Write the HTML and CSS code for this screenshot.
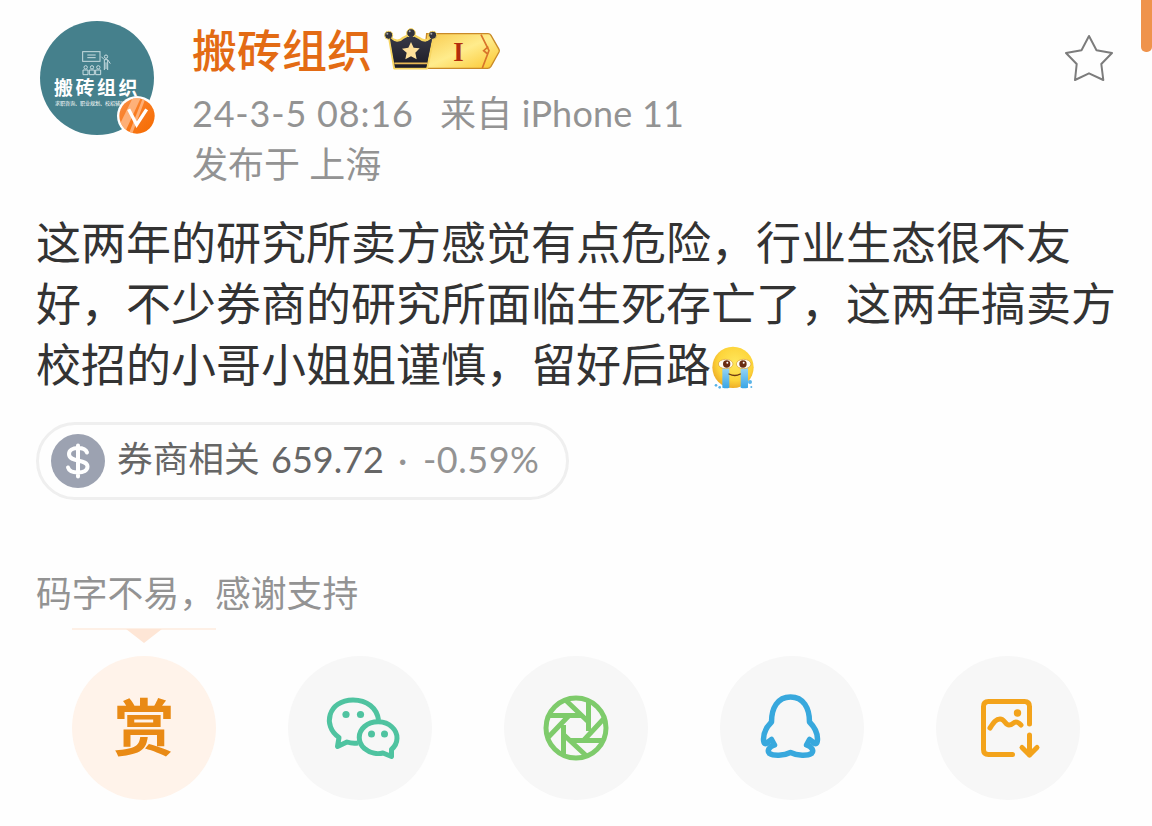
FILE: index.html
```html
<!DOCTYPE html>
<html lang="zh-CN">
<head>
  <meta charset="UTF-8" />
  <title>搬砖组织</title>
  <meta name="viewport" content="width=device-width, initial-scale=1.0"/>
  <link rel="stylesheet" href="styles.css">
</head>
<body>

<div class="scrollbar"></div>

<div class="post">
  <header class="post-header">
    <div class="avatar">
      <svg class="avatar-art" viewBox="0 0 90 75" fill="none" stroke="#c9dde1" stroke-width="3">
        <rect x="2" y="2" width="52" height="29"/>
        <path d="M16 12h25M16 20h25"/>
        <circle cx="72" cy="17" r="5"/>
        <path d="M58 17l9 9h10l8 12M67 27v30M77 27v30M72 34v20"/>
        <circle cx="11" cy="49" r="5"/><circle cx="30" cy="49" r="5"/><circle cx="49" cy="49" r="5"/>
        <path d="M3 71V57h15v14zM22 71V57h15v14zM41 71V57h15v14z"/>
      </svg>
      <div class="avatar-name">搬砖组织</div>
      <div class="avatar-sub">求职咨询、职业规划、校招辅导</div>
      <svg class="avatar-v" viewBox="0 0 120 120">
        <defs>
          <linearGradient id="vg" x1="0" y1="0" x2="1" y2="1">
            <stop offset="0" stop-color="#f98f48"/>
            <stop offset=".5" stop-color="#f97a1c"/>
            <stop offset="1" stop-color="#f56a00"/>
          </linearGradient>
          <clipPath id="vc"><circle cx="60" cy="60" r="53"/></clipPath>
        </defs>
        <circle cx="60" cy="60" r="60" fill="#fff"/>
        <circle cx="60" cy="60" r="53" fill="url(#vg)"/>
        <g clip-path="url(#vc)" fill="#ffc193" opacity=".75">
          <path d="M10 82L50 0h24L26 104z"/>
          <path d="M36 112L80 0h8L44 118z"/>
        </g>
        <path d="M35 40l24 46 30-46" fill="none" stroke="#fff" stroke-width="10"/>
      </svg>
    </div>

    <div class="info">
      <div class="name-row">
        <span class="name">搬砖组织</span>
        <svg class="vip" viewBox="0 0 390 180">
          <defs>
            <linearGradient id="gold" x1="0" y1="0" x2="1" y2="1">
              <stop offset="0" stop-color="#f8c94c"/>
              <stop offset=".5" stop-color="#ffec8c"/>
              <stop offset="1" stop-color="#fbc52c"/>
            </linearGradient>
            <linearGradient id="dark" x1="0" y1="0" x2="0" y2="1">
              <stop offset="0" stop-color="#3a3b48"/>
              <stop offset="1" stop-color="#1c1b25"/>
            </linearGradient>
          </defs>
          <path d="M140 41h184q6 0 9 5l24 42q2 4 0 8l-24 43q-4 6-10 6H130z" fill="url(#gold)" stroke="#c98a28" stroke-width="4"/>
          <path d="M303 44l24 48-20 52M325 80l-14 12 12 10" fill="none" stroke="#d8742a" stroke-width="5"/>
          <path d="M27 50q25 22 43 3l23-12 23 12q20 18 45-3l-20 95H43z" fill="url(#dark)" stroke="#f7d561" stroke-width="7" stroke-linejoin="round"/>
          <g fill="#34343c" stroke="#f7d561" stroke-width="3">
            <circle cx="26" cy="46" r="12"/><circle cx="93" cy="39" r="13"/><circle cx="158" cy="46" r="12"/>
          </g>
          <path d="M29 52q22 24 41 10l23-16 23 16q18 14 41-10l-18 91H45z" fill="url(#dark)"/>
          <path d="M43 130h98" stroke="#e9b955" stroke-width="5"/>
          <g fill="#a9a9a9"><circle cx="22" cy="41" r="3"/><circle cx="89" cy="34" r="3"/><circle cx="154" cy="41" r="3"/></g>
          <path d="M93 66l8 17 18 2-13 13 4 20-17-9-17 9 4-20-14-12 19-3z" fill="#ffe09a"/>
          <text class="vip-level" x="235" y="122" text-anchor="middle">I</text>
        </svg>
      </div>
      <div class="meta"><span class="date">24-3-5 08:16</span><span class="from">来自 iPhone 11</span></div>
      <div class="meta">发布于 上海</div>
    </div>

    <svg class="fav" viewBox="0 0 48 48" fill="none" stroke="#7c7c7c" stroke-width="2" stroke-linejoin="round">
      <path d="M24 2l7.500 14.200L47 19 36.300 30l2 16L24 39.300 10 46l1.700-16L1 19l15.500-2.800z"/>
    </svg>
  </header>

  <p class="content">这两年的研究所卖方感觉有点危险，行业生态很不友<br>好，不少券商的研究所面临生死存亡了，这两年搞卖方<br>校招的小哥小姐姐谨慎，留好后路<svg class="emoji" viewBox="0 0 132 132">
    <defs>
      <radialGradient id="face" cx=".55" cy=".4" r=".6">
        <stop offset="0" stop-color="#ffe75c"/>
        <stop offset=".7" stop-color="#fdd43a"/>
        <stop offset="1" stop-color="#eeae28"/>
      </radialGradient>
      <linearGradient id="tear" x1="0" y1="0" x2="0" y2="1">
        <stop offset="0" stop-color="#9ad6f5"/>
        <stop offset="1" stop-color="#38a5e6"/>
      </linearGradient>
    </defs>
    <circle cx="66" cy="64" r="62" fill="url(#face)"/>
    <path d="M34 64h21v61q-8 4-21 0zM89 64h22v61q-12 4-22 0z" fill="url(#tear)"/>
    <ellipse cx="44" cy="54" rx="22" ry="14" fill="#fffdf2" stroke="#d99a2c" stroke-width="2"/>
    <ellipse cx="98" cy="54" rx="22" ry="14" fill="#fffdf2" stroke="#d99a2c" stroke-width="2"/>
    <circle cx="47" cy="54" r="11" fill="#6a2b11"/><circle cx="96" cy="54" r="11" fill="#6a2b11"/>
    <circle cx="49" cy="50" r="3" fill="#fff"/><circle cx="98" cy="50" r="3" fill="#fff"/>
    <path d="M54 84q18 9 34 0" fill="none" stroke="#6f3a12" stroke-width="4" stroke-linecap="round"/>
    <g fill="#58b3e8"><circle cx="15" cy="118" r="4"/><circle cx="26" cy="124" r="4"/><circle cx="117" cy="108" r="6"/><circle cx="121" cy="123" r="3"/></g>
  </svg></p>

  <div class="stock">
    <svg class="stock-icon" viewBox="0 0 54 54">
      <circle cx="27" cy="27" r="27" fill="#9ca2b1"/>
      <path d="M36 18.500c-1-3-4.500-4.500-9-4.500-5.500 0-9 2.300-9 6 0 9 18.500 4.500 18.500 12.500 0 4-4 6-9.500 6-5 0-9-1.500-10-5M27 11.500v31" fill="none" stroke="#fff" stroke-width="4" stroke-linecap="round"/>
    </svg>
    <span class="stock-name">券商相关</span>
    <span class="stock-price">659.72</span>
    <span class="stock-dot">·</span>
    <span class="stock-change">-0.59%</span>
  </div>

  <div class="thanks">码字不易，感谢支持</div>
  <div class="pointer"></div>

  <div class="actions">
    <div class="action reward">赏</div>
    <div class="action">
      <svg viewBox="0 0 144 144" fill="none" stroke="#4fc3a0" stroke-width="5" stroke-linejoin="round">
        <path d="M70 87q-6 .8-11-1l-9.500 4.500 1.500-9C34 70 40 44 65 44c14 0 24 8 25.500 20"/>
        <path d="M103.500 93.500c7-6 7.500-16 .5-22.500-7-7-20-7-27.500-.5-7 6-7 16 0 22 5.500 4.500 13 6 18.500 4.500l8.500 3.500z"/>
        <g fill="#4fc3a0" stroke="none"><circle cx="58" cy="58.500" r="3.600"/><circle cx="72.500" cy="58.500" r="3.600"/><circle cx="83.500" cy="78" r="3.500"/><circle cx="96.500" cy="78" r="3.500"/></g>
      </svg>
    </div>
    <div class="action">
      <svg viewBox="0 0 144 144" fill="none" stroke="#7ecb6b" stroke-width="5">
        <circle cx="72" cy="72" r="30"/>
        <path d="M62 44.500l22 21M84.500 45v30M99.500 63L80 84M98 84.500H66M82 99.500L60 79M59.500 99V69M44.500 81l21-22M46 59.500h32"/>
      </svg>
    </div>
    <div class="action">
      <svg viewBox="0 0 144 144" fill="none" stroke="#38a8dd" stroke-width="5.500" stroke-linejoin="round" stroke-linecap="round">
        <path d="M70.500 41C57.500 41 51.500 52 51.500 66c-5 5-8 11-8 17 0 5 2 5.500 4 3.500l4-3 3 5.500c-6 2-7.500 6-5 8.500 4 2.500 14 2.500 21-1 7 3.500 17 3.500 21 1 2.500-2.500 1-6.500-5-8.500l3-5.500 4 3c2 2 4 1.500 4-3.500 0-6-3-12-8-17C89.500 52 83.500 41 70.500 41z"/>
      </svg>
    </div>
    <div class="action">
      <svg viewBox="0 0 144 144" fill="none" stroke="#f3a31b" stroke-width="5" stroke-linecap="round" stroke-linejoin="round">
        <path d="M93.500 68V50.500q0-5-5-5H52.500q-5 0-5 5V93.500q0 5 5 5h24"/>
        <path d="M54 72c4-6 6-9 10-9 5 0 5 6 9 6 4 0 4-3 7-3 2 0 3 1 5 3"/>
        <circle cx="81.500" cy="57" r="3.700" fill="#f3a31b" stroke="none"/>
        <path d="M93.500 79v20M86 91.500l7.500 7.500 7.500-7.500"/>
      </svg>
    </div>
  </div>
</div>

</body>
</html>
```
FILE: styles.css
```css
* { box-sizing: border-box; }
body {
  margin: 0;
  height: 826px;
  overflow: hidden;
  background: #fefefe;
  color: #333;
  font-family: Lato, "Noto Sans CJK SC", sans-serif;
}
svg { display: block; }
.scrollbar {
  position: absolute;
  top: 0;
  right: 0;
  width: 11px;
  height: 52px;
  background: #ef934c;
  border-radius: 0 0 5px 5px;
}
.post { padding: 21px 36px 0; }

.post-header { display: flex; height: 192px; padding-left: 4px; }
.avatar {
  position: relative;
  width: 114px;
  height: 114px;
  padding-top: 30px;
  border-radius: 50%;
  background: #45808c;
  color: #fff;
  text-align: center;
}
.avatar-art { width: 30px; height: 25px; margin-left: 42px; }
.avatar-name { font-size: 19px; font-weight: 700; line-height: 24px; letter-spacing: 2.500px; white-space: nowrap; }
.avatar-sub { width: 100px; margin-left: 15px; overflow: hidden; font-size: 5px; line-height: 7px; text-align: left; white-space: nowrap; }
.avatar-v { position: absolute; left: 77px; top: 75px; width: 40px; height: 40px; }
.info { flex: 1; margin-left: 38px; }
.name-row { display: flex; height: 68px; margin-top: -1px; }
.name { width: 188px; color: #e36b14; font-size: 45px; line-height: 62px; font-weight: 500; }
.vip { width: 130px; height: 60px; }
.vip-level { fill: #b32d0d; font: bold 80px "Liberation Serif", serif; }
.meta { color: #939393; font-size: 36px; line-height: 51px; white-space: nowrap; }
.date { display: inline-block; width: 248px; letter-spacing: .8px; }
.from { letter-spacing: .2px; }
.fav { width: 48px; height: 48px; margin: 13px 3px 0 0; }

.content { margin: 0; font-size: 45px; line-height: 61px; white-space: nowrap; }
.emoji { display: inline-block; width: 44px; height: 44px; vertical-align: -8px; }

.stock {
  display: flex;
  align-items: center;
  width: 533px;
  height: 78px;
  margin-top: 26px;
  padding-left: 12px;
  border: 3px solid #efefef;
  border-radius: 39px;
  color: #666;
  font-size: 36px;
  line-height: 52px;
  white-space: nowrap;
}
.stock span { padding-bottom: 4px; }
.stock-icon { width: 54px; height: 54px; margin-right: 12px; }
.stock-name { width: 154px; font-size: 35.700px; }
.stock-price { width: 127px; }
.stock-dot { width: 25px; color: #939393; }
.stock-change { color: #939393; letter-spacing: .5px; }

.thanks { margin-top: 68px; color: #939393; font-size: 35.800px; line-height: 52px; }
.pointer { width: 144px; height: 16px; margin: 8px 0 12px 36px; border-top: 2px solid #fef0e6; }
.pointer:before {
  content: "";
  display: block;
  width: 36px;
  height: 14px;
  margin: -1px auto 0;
  background: #fee6d6;
  clip-path: polygon(0 0, 100% 0, 50% 100%);
}
.actions { display: flex; gap: 72px; padding-left: 36px; }
.action { width: 144px; height: 144px; border-radius: 50%; background: #f7f7f7; }
.reward {
  background: #fff3ea;
  color: #e98a15;
  font-size: 61px;
  line-height: 143px;
  font-weight: 700;
  text-align: center;
}
```
